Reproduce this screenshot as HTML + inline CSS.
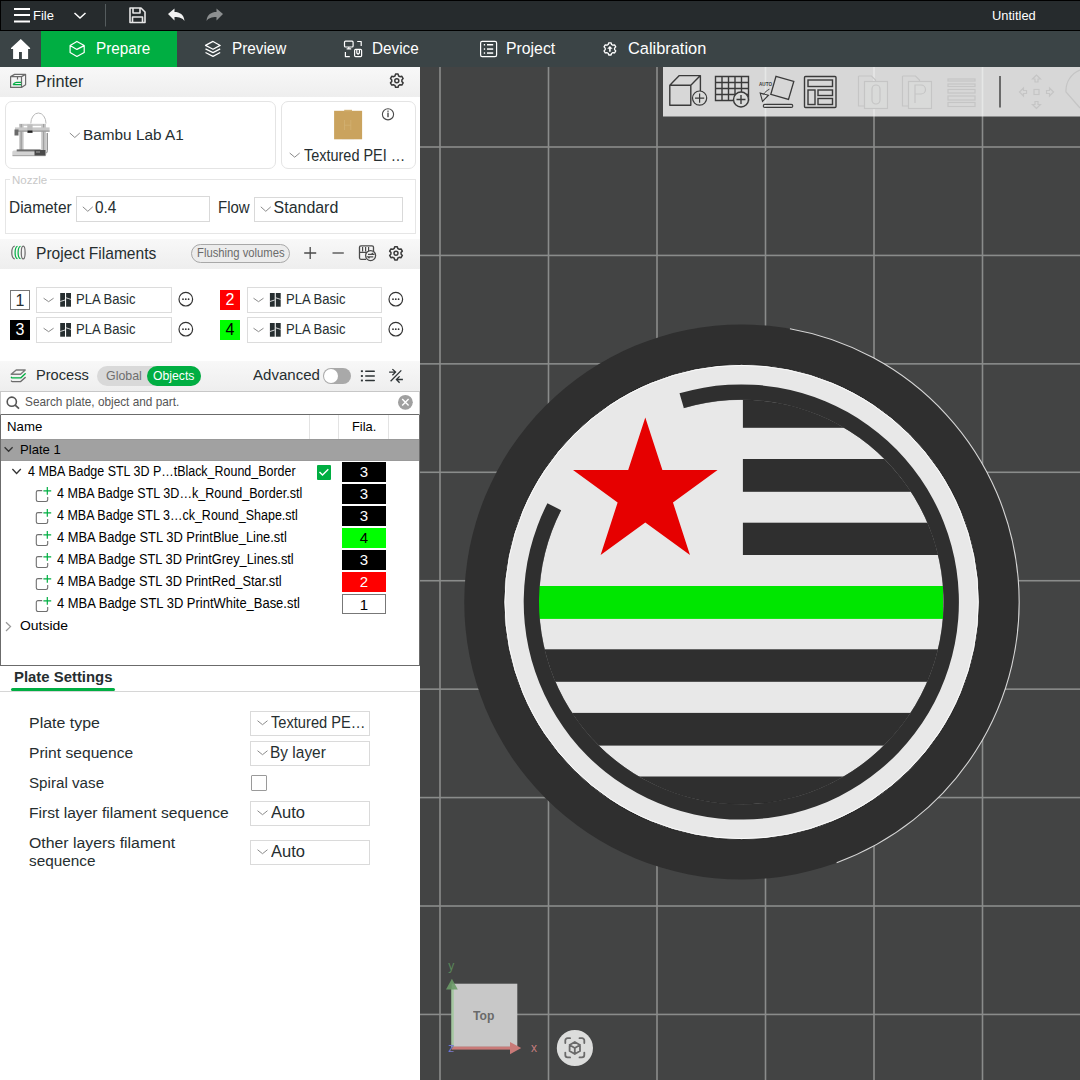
<!DOCTYPE html>
<html><head><meta charset="utf-8">
<style>
html,body{margin:0;padding:0;width:1080px;height:1080px;overflow:hidden;background:#fff;}
body{position:relative;font-family:"Liberation Sans",sans-serif;}
.a{position:absolute;box-sizing:border-box;}
.t{position:absolute;z-index:3;white-space:pre;line-height:1;font-family:"Liberation Sans",sans-serif;}
.fbox{position:absolute;left:342px;width:44px;height:20px;box-sizing:border-box;font:15px/20px "Liberation Sans",sans-serif;text-align:center;}
svg.ov{position:absolute;left:0;top:0;width:1080px;height:1080px;}
</style></head><body>
<!-- title bar -->
<div class="a" style="left:0;top:0;width:1080px;height:31px;background:#000;"></div>
<div class="a" style="left:1px;top:1px;width:1079px;height:28.5px;background:#262b2d;"></div>
<!-- tab bar -->
<div class="a" style="left:0;top:31px;width:1080px;height:36px;background:#3b4446;"></div>
<div class="a" style="left:41px;top:31px;width:136px;height:36px;background:#00ae42;"></div>
<!-- left panel headers -->
<div class="a" style="left:0;top:67px;width:420px;height:30px;background:linear-gradient(#f8f8f8,#eeeeee);"></div>
<div class="a" style="left:4.5px;top:101px;width:271px;height:67.5px;border:1px solid #e4e4e4;border-radius:7px;"></div>
<div class="a" style="left:280.5px;top:101px;width:135px;height:67.5px;border:1px solid #e4e4e4;border-radius:7px;"></div>
<div class="a" style="left:4.5px;top:179px;width:411px;height:54.5px;border:1px solid #e6e6e6;"></div>
<div class="a" style="left:10px;top:172px;width:40px;height:12px;background:#fff;"></div>
<div class="a" style="left:75.5px;top:196px;width:134px;height:25.5px;border:1px solid #d9d9d9;"></div>
<div class="a" style="left:253.5px;top:196.5px;width:149.5px;height:25px;border:1px solid #d9d9d9;"></div>
<div class="a" style="left:0;top:239px;width:420px;height:29.5px;background:linear-gradient(#f8f8f8,#eeeeee);"></div>
<div class="a" style="left:191px;top:244px;width:99px;height:19px;border:1px solid #a8a8a8;border-radius:10px;background:#ececec;"></div>
<div class="a" style="left:10px;top:290px;width:20px;height:20px;border:1px solid #777;background:#fff;"></div>
<div class="a" style="left:10px;top:320px;width:20px;height:19.5px;background:#000;color:#fff;font:16px/20px 'Liberation Sans';text-align:center;">3</div>
<div class="a" style="left:220px;top:290px;width:20px;height:20px;background:#ff0000;color:#fff;font:16px/20px 'Liberation Sans';text-align:center;">2</div>
<div class="a" style="left:220px;top:320px;width:20px;height:20px;background:#00ff00;color:#000;font:16px/20px 'Liberation Sans';text-align:center;">4</div>
<div class="a" style="left:10px;top:290.5px;width:20px;height:19.5px;color:#262e30;font:16px/20px 'Liberation Sans';text-align:center;">1</div>
<div class="a" style="left:36px;top:287px;width:135.5px;height:25.5px;border:1px solid #dcdcdc;"></div>
<div class="a" style="left:246.5px;top:287px;width:135.5px;height:25.5px;border:1px solid #dcdcdc;"></div>
<div class="a" style="left:36px;top:317px;width:135.5px;height:25.5px;border:1px solid #dcdcdc;"></div>
<div class="a" style="left:246.5px;top:317px;width:135.5px;height:25.5px;border:1px solid #dcdcdc;"></div>
<!-- process -->
<div class="a" style="left:0;top:361px;width:420px;height:30px;background:linear-gradient(#f8f8f8,#eeeeee);"></div>
<div class="a" style="left:97px;top:365.5px;width:103.5px;height:20.5px;border-radius:10.5px;background:#d9d9d9;"></div>
<div class="a" style="left:147px;top:366px;width:53.5px;height:20px;border-radius:10px;background:#00ae42;"></div>
<div class="a" style="left:322.5px;top:368px;width:28px;height:16px;border-radius:8px;background:#a9a9a9;"></div>
<div class="a" style="left:323.5px;top:369px;width:14px;height:14px;border-radius:7px;background:#fff;"></div>
<!-- search -->
<div class="a" style="left:0;top:391px;width:420px;height:24px;border:1px solid #c7c7c7;border-bottom:1.5px solid #6b6b6b;"></div>
<!-- table -->
<div class="a" style="left:0;top:414.5px;width:420px;height:251px;border:1px solid #6b6b6b;border-top:none;"></div>
<div class="a" style="left:308.5px;top:415px;width:1px;height:24px;background:#e3e3e3;"></div>
<div class="a" style="left:338px;top:415px;width:1px;height:24px;background:#e3e3e3;"></div>
<div class="a" style="left:388px;top:415px;width:1px;height:24px;background:#e3e3e3;"></div>
<div class="a" style="left:1px;top:439px;width:418px;height:21.5px;background:#a1a1a1;border-top:1px solid #999;border-bottom:1px solid #999;"></div>
<div class="a" style="left:317px;top:465px;width:14px;height:14.5px;background:#00ae42;border-radius:1px;"></div>
<div class="fbox" style="top:462px;background:#000;color:#fff;">3</div>
<div class="fbox" style="top:484px;background:#000;color:#fff;">3</div>
<div class="fbox" style="top:506px;background:#000;color:#fff;">3</div>
<div class="fbox" style="top:528px;background:#00ff00;color:#000;">4</div>
<div class="fbox" style="top:550px;background:#000;color:#fff;">3</div>
<div class="fbox" style="top:572px;background:#ff0000;color:#fff;">2</div>
<div class="fbox" style="top:594px;background:#fff;color:#000;border:1px solid #777;">1</div>
<!-- plate settings -->
<div class="a" style="left:11px;top:688px;width:104px;height:3px;border-radius:1.5px;background:#00ae42;"></div>
<div class="a" style="left:0;top:690.5px;width:420px;height:1px;background:#d6d6d6;"></div>
<div class="a" style="left:250px;top:710.5px;width:120px;height:25px;border:1px solid #dadada;"></div>
<div class="a" style="left:250px;top:740.5px;width:120px;height:25px;border:1px solid #dadada;"></div>
<div class="a" style="left:251px;top:775px;width:16px;height:15.5px;border:1px solid #9a9a9a;border-radius:1px;"></div>
<div class="a" style="left:250px;top:800.5px;width:120px;height:25px;border:1px solid #dadada;"></div>
<div class="a" style="left:250px;top:839.5px;width:120px;height:25px;border:1px solid #dadada;"></div>
<!-- 3D scene -->
<div class="a" style="left:420px;top:67px;width:660px;height:1013px;background:#434444;overflow:hidden;"></div>
<svg class="ov" viewBox="0 0 1080 1080" style="z-index:0"><defs><clipPath id="v3"><rect x="420" y="67" width="660" height="1013"/></clipPath></defs><g clip-path="url(#v3)" fill="#8a8c8b"><rect x="439.20" y="67" width="1.6" height="1013"/><rect x="547.70" y="67" width="1.6" height="1013"/><rect x="656.20" y="67" width="1.6" height="1013"/><rect x="764.70" y="67" width="1.6" height="1013"/><rect x="873.20" y="67" width="1.6" height="1013"/><rect x="981.70" y="67" width="1.6" height="1013"/><rect x="420" y="146.20" width="660" height="1.6"/><rect x="420" y="254.63" width="660" height="1.6"/><rect x="420" y="363.06" width="660" height="1.6"/><rect x="420" y="471.49" width="660" height="1.6"/><rect x="420" y="579.92" width="660" height="1.6"/><rect x="420" y="688.35" width="660" height="1.6"/><rect x="420" y="796.78" width="660" height="1.6"/><rect x="420" y="905.21" width="660" height="1.6"/><rect x="420" y="1013.64" width="660" height="1.6"/></g></svg>
<svg class="ov" viewBox="0 0 1080 1080" style="z-index:1"><defs><clipPath id="inner"><circle cx="741.3" cy="602" r="202.3"/></clipPath><clipPath id="v3b"><rect x="420" y="67" width="660" height="1013"/></clipPath></defs><g clip-path="url(#v3b)"><circle cx="741.75" cy="602" r="277.5" fill="#2f2f2f"/><path d="M789.92,328.81 A277.4,277.4 0 0 1 836.63,862.67" fill="none" stroke="#f2f2f2" stroke-width="1.1" opacity="0.85"/><circle cx="741.6" cy="602" r="237.6" fill="#e8e8e8" stroke="#141414" stroke-width="0.8"/><circle cx="741.6" cy="602" r="236.6" fill="none" stroke="#fbfbfb" stroke-width="1"/><g clip-path="url(#inner)" fill="#2f2f2f"><rect x="742.9" y="380" width="220" height="47.8"/><rect x="742.9" y="459" width="220" height="32.8"/><rect x="742.9" y="522.7" width="220" height="32.3"/><rect x="520" y="649.3" width="440" height="32.5"/><rect x="520" y="712.9" width="440" height="32.7"/><rect x="520" y="776.5" width="440" height="53.5"/></g><path d="M683.76,407.74 A202.6,202.6 0 1 1 560.78,510.02" fill="none" stroke="#1c1c1c" stroke-width="0.7" opacity="0.8"/><rect x="539" y="586" width="404" height="32.9" fill="#00e600"/><path d="M679.50,393.36 A217.6,217.6 0 1 1 547.42,503.21 L561.05,510.16 A202.3,202.3 0 1 0 683.84,408.03 Z" fill="#2f2f2f"/><polygon points="645.30,417.50 662.40,469.96 717.58,470.01 672.98,502.49 689.97,554.99 645.30,522.60 600.63,554.99 617.62,502.49 573.02,470.01 628.20,469.96" fill="#e60000"/></g><rect x="663" y="67" width="417" height="49.5" fill="#ffffff" opacity="0.79"/><g fill="none" stroke="#3a3a3a" stroke-width="1.4">
<path d="M669.8,85.2 h21 v20 h-21 z M669.8,85.2 l9.5,-9.6 h21.1 l-9.6,9.6 M700.4,75.6 v15.5" stroke-linejoin="round"/>
<circle cx="699.6" cy="98.1" r="7.1" fill="#d9dad9" stroke-width="1.2"/><path d="M695,98.1 h9.2 M699.6,93.5 v9.2" stroke-width="1.2"/>
<path d="M715.5,76.5 h33 v24 h-33 z M715.5,82.5 h33 M715.5,88.5 h33 M715.5,94.5 h33 M722,76.5 v24 M728.5,76.5 v24 M735,76.5 v24 M741.5,76.5 v24"/>
<circle cx="741" cy="99.5" r="7.5" fill="#d9dad9"/><path d="M736.5,99.5 h9 M741,95 v9"/>
<path d="M776,76.3 L793.8,81.5 L788.5,99.4 L770.8,94.4 Z" stroke-width="1.3"/>
<path d="M769.4,89.2 C767,90.5 765,92 763.3,94.6" stroke-width="1"/><path d="M760.2,93.1 L768.5,95.2 L762.5,101.5 Z" stroke-width="1.1"/>
<rect x="763.3" y="104.4" width="29.5" height="3" rx="1.5" stroke-width="1.1"/>
<rect x="804.5" y="76.5" width="31.5" height="31" rx="1"/>
<rect x="808" y="80" width="24.5" height="6.5"/><rect x="808" y="90" width="7" height="14.5"/><rect x="818" y="90" width="14.5" height="5.5"/><rect x="818" y="98.5" width="14.5" height="6"/>
</g>
<text x="759" y="85.8" font-family="Liberation Sans" font-size="5.6" font-weight="700" fill="#3a3a3a" textLength="13" lengthAdjust="spacingAndGlyphs">AUTO</text>
<g fill="none" stroke="#c5c5c5" stroke-width="1.2">
<path d="M858.5,76 h13 l4,4 v8"/><path d="M858.5,76 v30 h6"/><rect x="864.5" y="81.5" width="23" height="27" fill="#d9dad9"/>
<path d="M872,89 a4,4 0 0 1 8,0 v11 a4,4 0 0 1 -8,0 z"/>
<path d="M902.5,76 h13 l4,4 v8"/><path d="M902.5,76 v30 h6"/><rect x="908.5" y="81.5" width="23" height="27" fill="#d9dad9"/>
<path d="M915,103 v-18 h6 a4.5,4.5 0 0 1 0,9 h-6"/>
<rect x="948" y="79" width="27" height="2"/><rect x="948" y="84" width="27" height="2.5"/><rect x="948" y="89.5" width="27" height="3.5"/><rect x="948" y="96" width="27" height="4"/><rect x="948" y="102.5" width="27" height="4"/>
<path d="M1036.5,75 l-4,4 h2.5 v3 h3 v-3 h2.5 z M1036.5,108.5 l-4,-4 h2.5 v-3 h3 v3 h2.5 z M1019.5,92 l4,-4 v2.5 h3 v3 h-3 v2.5 z M1053.5,92 l-4,-4 v2.5 h-3 v3 h3 v2.5 z"/>
<rect x="1034" y="89.5" width="5" height="5"/>
<path d="M1080,70 a22,22 0 0 0 -14,22 l14,16"/>
</g>
<rect x="999" y="76" width="2" height="31.5" fill="#6a6a6a"/><rect x="451.7" y="983.7" width="65.6" height="63.2" fill="#c8c8c8"/><rect x="451.2" y="988" width="2.6" height="59.5" fill="#9fc79a" opacity="0.85"/><polygon points="451.9,978.8 446,989.5 457.8,989.5" fill="#6b9b68" opacity="0.9"/><rect x="452" y="1046.6" width="59" height="3" fill="#c97a78"/><polygon points="510,1042 510,1054.2 521.2,1048.1" fill="#c97a78"/><circle cx="574.9" cy="1048" r="18.1" fill="#dcdddc"/><g fill="none" stroke="#6a6a6a" stroke-width="1.8" stroke-linecap="round"><path d="M565.3,1043 v-2.5 a2.3,2.3 0 0 1 2.3,-2.3 h2.5"/><path d="M579.5,1038.2 h2.5 a2.3,2.3 0 0 1 2.3,2.3 v2.5"/><path d="M565.3,1052.6 v2.5 a2.3,2.3 0 0 0 2.3,2.3 h2.5"/><path d="M579.5,1057.4 h2.5 a2.3,2.3 0 0 0 2.3,-2.3 v-2.5"/><path d="M574.8,1042 l5.2,3 v6 l-5.2,3 l-5.2,-3 v-6 z M569.6,1045 l5.2,3 l5.2,-3 M574.8,1048 v6"/></g></svg>
<div class="t" style="left:33.18px;top:9.66px;font-size:12.75px;color:#ffffff;font-weight:400;transform:scaleX(1.0158);transform-origin:0 0;">File</div>
<div class="t" style="left:992.33px;top:9.27px;font-size:13.33px;color:#ffffff;font-weight:400;transform:scaleX(0.9674);transform-origin:0 0;">Untitled</div>
<div class="t" style="left:96.12px;top:41.20px;font-size:15.65px;color:#ffffff;font-weight:400;transform:scaleX(0.9759);transform-origin:0 0;">Prepare</div>
<div class="t" style="left:231.82px;top:41.20px;font-size:15.65px;color:#ffffff;font-weight:400;transform:scaleX(0.9782);transform-origin:0 0;">Preview</div>
<div class="t" style="left:371.82px;top:41.20px;font-size:15.65px;color:#ffffff;font-weight:400;transform:scaleX(0.9783);transform-origin:0 0;">Device</div>
<div class="t" style="left:506.19px;top:41.20px;font-size:15.65px;color:#ffffff;font-weight:400;transform:scaleX(1.0104);transform-origin:0 0;">Project</div>
<div class="t" style="left:628.15px;top:41.20px;font-size:15.65px;color:#ffffff;font-weight:400;transform:scaleX(1.0466);transform-origin:0 0;">Calibration</div>
<div class="t" style="left:35.60px;top:72.90px;font-size:16.23px;color:#262e30;font-weight:400;">Printer</div>
<div class="t" style="left:82.81px;top:127.12px;font-size:15.51px;color:#262e30;font-weight:400;transform:scaleX(0.9900);transform-origin:0 0;">Bambu Lab A1</div>
<div class="t" style="left:304.10px;top:147.02px;font-size:16.09px;color:#262e30;font-weight:400;transform:scaleX(0.8991);transform-origin:0 0;">Textured PEI …</div>
<div class="t" style="left:12.33px;top:174.59px;font-size:10.72px;color:#c8c8c8;font-weight:400;transform:scaleX(1.0742);transform-origin:0 0;">Nozzle</div>
<div class="t" style="left:8.93px;top:199.95px;font-size:15.94px;color:#262e30;font-weight:400;transform:scaleX(0.9688);transform-origin:0 0;">Diameter</div>
<div class="t" style="left:95.43px;top:200.15px;font-size:15.94px;color:#262e30;font-weight:400;transform:scaleX(0.9667);transform-origin:0 0;">0.4</div>
<div class="t" style="left:217.96px;top:199.95px;font-size:15.94px;color:#262e30;font-weight:400;transform:scaleX(0.9394);transform-origin:0 0;">Flow</div>
<div class="t" style="left:273.60px;top:200.05px;font-size:15.94px;color:#262e30;font-weight:400;">Standard</div>
<div class="t" style="left:35.65px;top:244.98px;font-size:16.38px;color:#262e30;font-weight:400;transform:scaleX(0.9520);transform-origin:0 0;">Project Filaments</div>
<div class="t" style="left:196.86px;top:247.17px;font-size:12.03px;color:#6b6b6b;font-weight:400;transform:scaleX(0.9370);transform-origin:0 0;">Flushing volumes</div>
<div class="t" style="left:75.80px;top:292.18px;font-size:14.49px;color:#262e30;font-weight:400;transform:scaleX(0.9016);transform-origin:0 0;">PLA Basic</div>
<div class="t" style="left:285.90px;top:292.18px;font-size:14.49px;color:#262e30;font-weight:400;transform:scaleX(0.9016);transform-origin:0 0;">PLA Basic</div>
<div class="t" style="left:75.80px;top:322.18px;font-size:14.49px;color:#262e30;font-weight:400;transform:scaleX(0.9016);transform-origin:0 0;">PLA Basic</div>
<div class="t" style="left:285.90px;top:322.18px;font-size:14.49px;color:#262e30;font-weight:400;transform:scaleX(0.9016);transform-origin:0 0;">PLA Basic</div>
<div class="t" style="left:35.62px;top:367.81px;font-size:14.93px;color:#262e30;font-weight:400;transform:scaleX(0.9792);transform-origin:0 0;">Process</div>
<div class="t" style="left:106.41px;top:369.81px;font-size:12.46px;color:#6e6e6e;font-weight:400;transform:scaleX(0.9941);transform-origin:0 0;">Global</div>
<div class="t" style="left:152.73px;top:369.68px;font-size:12.61px;color:#ffffff;font-weight:400;transform:scaleX(0.9690);transform-origin:0 0;">Objects</div>
<div class="t" style="left:253.40px;top:367.81px;font-size:14.93px;color:#262e30;font-weight:400;transform:scaleX(1.0076);transform-origin:0 0;">Advanced</div>
<div class="t" style="left:25.48px;top:395.54px;font-size:12.9px;color:#555555;font-weight:400;transform:scaleX(0.9163);transform-origin:0 0;">Search plate, object and part.</div>
<div class="t" style="left:6.56px;top:420.56px;font-size:12.75px;color:#000000;font-weight:400;transform:scaleX(1.0364);transform-origin:0 0;">Name</div>
<div class="t" style="left:351.69px;top:420.56px;font-size:12.75px;color:#000000;font-weight:400;transform:scaleX(1.0091);transform-origin:0 0;">Fila.</div>
<div class="t" style="left:19.61px;top:443.09px;font-size:13.19px;color:#000000;font-weight:400;transform:scaleX(0.9925);transform-origin:0 0;">Plate 1</div>
<div class="t" style="left:28.40px;top:464.68px;font-size:13.91px;color:#000000;font-weight:400;transform:scaleX(0.8960);transform-origin:0 0;">4 MBA Badge STL 3D P…tBlack_Round_Border</div>
<div class="t" style="left:56.60px;top:486.68px;font-size:13.91px;color:#000000;font-weight:400;transform:scaleX(0.9030);transform-origin:0 0;">4 MBA Badge STL 3D…k_Round_Border.stl</div>
<div class="t" style="left:56.60px;top:508.68px;font-size:13.91px;color:#000000;font-weight:400;transform:scaleX(0.8996);transform-origin:0 0;">4 MBA Badge STL 3…ck_Round_Shape.stl</div>
<div class="t" style="left:56.60px;top:530.68px;font-size:13.91px;color:#000000;font-weight:400;transform:scaleX(0.9279);transform-origin:0 0;">4 MBA Badge STL 3D PrintBlue_Line.stl</div>
<div class="t" style="left:56.60px;top:552.68px;font-size:13.91px;color:#000000;font-weight:400;transform:scaleX(0.9215);transform-origin:0 0;">4 MBA Badge STL 3D PrintGrey_Lines.stl</div>
<div class="t" style="left:56.60px;top:574.68px;font-size:13.91px;color:#000000;font-weight:400;transform:scaleX(0.9214);transform-origin:0 0;">4 MBA Badge STL 3D PrintRed_Star.stl</div>
<div class="t" style="left:56.60px;top:596.68px;font-size:13.91px;color:#000000;font-weight:400;transform:scaleX(0.9315);transform-origin:0 0;">4 MBA Badge STL 3D PrintWhite_Base.stl</div>
<div class="t" style="left:19.54px;top:619.29px;font-size:13.19px;color:#000000;font-weight:400;transform:scaleX(1.0568);transform-origin:0 0;">Outside</div>
<div class="t" style="left:13.89px;top:669.54px;font-size:14.78px;color:#262e30;font-weight:700;transform:scaleX(1.0083);transform-origin:0 0;">Plate Settings</div>
<div class="t" style="left:29.36px;top:715.44px;font-size:15.36px;color:#262e30;font-weight:400;transform:scaleX(1.0373);transform-origin:0 0;">Plate type</div>
<div class="t" style="left:29.38px;top:745.14px;font-size:15.36px;color:#262e30;font-weight:400;transform:scaleX(1.0168);transform-origin:0 0;">Print sequence</div>
<div class="t" style="left:29.41px;top:775.14px;font-size:15.36px;color:#262e30;font-weight:400;transform:scaleX(0.9880);transform-origin:0 0;">Spiral vase</div>
<div class="t" style="left:29.38px;top:805.04px;font-size:15.36px;color:#262e30;font-weight:400;transform:scaleX(1.0169);transform-origin:0 0;">First layer filament sequence</div>
<div class="t" style="left:29.37px;top:835.34px;font-size:15.36px;color:#262e30;font-weight:400;transform:scaleX(1.0312);transform-origin:0 0;">Other layers filament</div>
<div class="t" style="left:29.40px;top:852.84px;font-size:15.36px;color:#262e30;font-weight:400;transform:scaleX(0.9969);transform-origin:0 0;">sequence</div>
<div class="t" style="left:271.30px;top:714.95px;font-size:15.94px;color:#262e30;font-weight:400;transform:scaleX(0.9188);transform-origin:0 0;">Textured PE…</div>
<div class="t" style="left:270.33px;top:744.75px;font-size:15.94px;color:#262e30;font-weight:400;transform:scaleX(0.9702);transform-origin:0 0;">By layer</div>
<div class="t" style="left:271.30px;top:804.75px;font-size:15.94px;color:#262e30;font-weight:400;transform:scaleX(1.0375);transform-origin:0 0;">Auto</div>
<div class="t" style="left:271.30px;top:843.75px;font-size:15.94px;color:#262e30;font-weight:400;transform:scaleX(1.0375);transform-origin:0 0;">Auto</div>
<div class="t" style="left:473.20px;top:1009.42px;font-size:13.04px;color:#6a6a6a;font-weight:700;transform:scaleX(0.9304);transform-origin:0 0;">Top</div>
<div class="t" style="left:448.30px;top:959.87px;font-size:12.03px;color:#5a875a;font-weight:400;">y</div>
<div class="t" style="left:448.30px;top:1042.07px;font-size:12.03px;color:#7a7ad0;font-weight:400;">z</div>
<div class="t" style="left:530.90px;top:1042.07px;font-size:12.03px;color:#c47c7c;font-weight:400;">x</div>
<svg class="ov" viewBox="0 0 1080 1080" style="z-index:5">
<!-- title bar -->
<g fill="#ffffff"><rect x="14" y="8" width="16" height="2"/><rect x="14" y="14" width="16" height="2"/><rect x="14" y="20.5" width="16" height="2"/></g>
<path d="M74.5,13 l5.5,5 l5.5,-5" fill="none" stroke="#fff" stroke-width="1.5"/>
<rect x="105" y="4" width="1" height="22.5" fill="#555c5e"/>
<path d="M130,8 h11 l4,4 v10.5 h-15 z M133,8 v5 h7 v-5 M132.5,17 h10 v5.5 h-10 z" fill="none" stroke="#e6e6e6" stroke-width="1.6" stroke-linejoin="round"/>
<path d="M168,14 l6.5,-5.5 v3.5 c5,0 9.5,2.5 10,9 c-2,-3 -5,-4 -10,-4 v3.5 z" fill="#f2f2f2"/>
<path d="M223,14 l-6.5,-5.5 v3.5 c-5,0 -9.5,2.5 -10,9 c2,-3 5,-4 10,-4 v3.5 z" fill="#8c8f90"/>
<!-- tabs -->
<path d="M20.8,38.9 L11,47.9 V48.9 H13.1 V58.9 H19 V52.1 H21.9 V58.9 H28.1 V48.9 H30.1 V47.9 Z" fill="#fff"/>
<g fill="none" stroke="#fff" stroke-width="1.2" stroke-linejoin="round">
<path d="M76.9,41.4 L84.2,45.6 V52.5 L76.9,56.5 L70.1,52.5 V45.6 Z M70.1,45.6 L76.9,49.4 L84.2,45.6"/>
<path d="M213,41.4 L220.2,45.4 L213,49.3 L205.5,45.4 Z M205.5,48.9 L213,52.6 L220.2,48.9 M205.5,52.5 L213,56.4 L220.2,52.5"/>
<rect x="344.5" y="41.2" width="8.6" height="5.8" rx="1"/><path d="M348.8,47 v1.6 M346.6,48.8 h4.6 M357.2,41.5 h4 v4.5 M345.4,52 v4.7 h4.4"/>
<rect x="354.6" y="49.4" width="7" height="7.2" rx="1"/><path d="M356.8,50 v3 l1.3,1.2 l1.3,-1.2 v-3" />
<rect x="480.6" y="41.4" width="16" height="15.2" rx="1.6"/>
</g>
<g fill="#fff"><rect x="483.8" y="44" width="1.3" height="1.5"/><rect x="483.8" y="48.3" width="1.3" height="1.5"/><rect x="483.8" y="52.3" width="1.3" height="1.5"/>
<rect x="487" y="44" width="6.2" height="1.5"/><rect x="487" y="48.3" width="6.2" height="1.5"/><rect x="487" y="52.3" width="6.2" height="1.5"/></g>
<polygon points="607.54,44.82 608.21,44.50 608.72,42.81 611.08,42.81 611.59,44.50 612.26,44.82 612.87,45.24 614.58,44.83 615.76,46.88 614.55,48.16 614.61,48.90 614.55,49.64 615.76,50.92 614.58,52.97 612.87,52.56 612.26,52.98 611.59,53.30 611.08,54.99 608.72,54.99 608.21,53.30 607.54,52.98 606.93,52.56 605.22,52.97 604.04,50.92 605.25,49.64 605.19,48.90 605.25,48.16 604.04,46.88 605.22,44.83 606.93,45.24" fill="none" stroke="#fff" stroke-width="1.3" stroke-linejoin="round"/>
<path d="M609.9,45.9 l-2.7,2.8 h1.9 v3 h1.6 v-3 h1.9 z" fill="#fff"/>
<!-- printer header icon -->
<g fill="none" stroke="#6b6b6b" stroke-width="1.2" stroke-linejoin="round">
<path d="M10.6,76.6 h10.9 v10.8 h-10.9 z M10.6,76.6 l4,-2.2 h11 l-4.1,2.2 M25.6,74.4 v10.3 l-4.1,2.7 M17.5,76.6 v2.8"/>
</g>
<path d="M13,84.6 c1,-1.5 2,-2.3 3.5,-2.3 h4.7 M13,84.6 h8.2" fill="none" stroke="#00ae42" stroke-width="1.3"/>
<!-- gear printer -->
<polygon points="394.25,76.29 394.98,75.95 395.52,74.12 398.08,74.12 398.62,75.95 399.35,76.29 400.00,76.74 401.86,76.30 403.13,78.52 401.83,79.90 401.89,80.70 401.83,81.50 403.13,82.88 401.86,85.10 400.00,84.66 399.35,85.11 398.62,85.45 398.08,87.28 395.52,87.28 394.98,85.45 394.25,85.11 393.60,84.66 391.74,85.10 390.47,82.88 391.77,81.50 391.71,80.70 391.77,79.90 390.47,78.52 391.74,76.30 393.60,76.74" fill="none" stroke="#3a3a3a" stroke-width="1.5" stroke-linejoin="round"/><circle cx="396.8" cy="80.7" r="2.01" fill="none" stroke="#3a3a3a" stroke-width="1.5"/>
<!-- info -->
<circle cx="388" cy="114.3" r="5.6" fill="none" stroke="#4a4a4a" stroke-width="1.1"/>
<rect x="387.3" y="112.6" width="1.4" height="4.6" fill="#4a4a4a"/><rect x="387.3" y="110.6" width="1.4" height="1.2" fill="#4a4a4a"/>
<!-- chevrons in dropdowns -->
<g fill="none" stroke="#8a8a8a" stroke-width="1">
<path d="M69.8,133 l5,4.5 l5,-4.5"/><path d="M289.7,153 l5,4.2 l5,-4.2"/>
<path d="M82.8,206.8 l5,4.5 l5,-4.5"/><path d="M260.8,206.8 l5,4.5 l5,-4.5"/>
<path d="M43.6,298.2 l5,3.5 l5,-3.5"/><path d="M253.5,298.2 l5,3.5 l5,-3.5"/>
<path d="M43.6,328.2 l5,3.5 l5,-3.5"/><path d="M253.5,328.2 l5,3.5 l5,-3.5"/>
<path d="M257.5,720.7 l5,4 l5,-4"/><path d="M257.5,750.7 l5,4 l5,-4"/><path d="M257.5,810.7 l5,4 l5,-4"/><path d="M257.5,849.7 l5,4 l5,-4"/>
</g>
<!-- printer image -->
<g>
<path d="M30.8,123.5 a7.6,10.5 0 0 1 15.2,0" fill="none" stroke="#b9b9b9" stroke-width="1"/>
<rect x="19" y="123.8" width="27" height="2.2" fill="#cfcfcf"/>
<rect x="19.2" y="124" width="4.4" height="26" fill="#c4c4c4"/><rect x="20.6" y="124" width="1.2" height="26" fill="#9c9c9c"/>
<rect x="41.2" y="124" width="4.8" height="27" fill="#c8c8c8"/><rect x="43" y="124" width="1.2" height="27" fill="#a0a0a0"/>
<rect x="15" y="127.4" width="34.6" height="4.2" fill="#c9c9c9"/><rect x="15" y="130.6" width="34.6" height="1" fill="#8f8f8f"/>
<rect x="14.5" y="129.5" width="4" height="6" fill="#6a6a6a"/>
<rect x="27.3" y="124.4" width="5.3" height="8.2" fill="#bdbdbd"/><rect x="27.5" y="130.5" width="5" height="2.3" fill="#222"/>
<path d="M47.2,133 v17.5 c0,1.5 -0.5,2.5 -1.5,3" fill="none" stroke="#555" stroke-width="0.9"/>
<rect x="12.3" y="150.5" width="34" height="5.6" rx="1.5" fill="#d2d2d2"/><rect x="12.5" y="155" width="33" height="1.2" fill="#a8a8a8"/><rect x="16.7" y="149.4" width="24" height="2" fill="#6b6b6b"/>
<rect x="34.5" y="150" width="11" height="5.5" fill="#4a4a4a"/><rect x="36" y="151" width="4" height="2" fill="#777"/>
</g>
<!-- plate image -->
<rect x="334.1" y="110.8" width="28" height="28.5" fill="#caa35e"/><path d="M344.5,120 v10 M350.8,120 v10 M344.5,125.2 h6.3" stroke="#d4b679" stroke-width="0.6"/><rect x="342" y="139" width="12" height="0.9" fill="#e8e0d0"/><rect x="344.2" y="109.8" width="7.8" height="1.5" fill="#d2b070"/>
<!-- filament icon -->
<g fill="none" stroke-width="1.2">
<path d="M14.8,246 c-2,0.5 -3,3.5 -3,6.5 s1,6 3,6.5" stroke="#6b6b6b"/>
<path d="M17.5,246.2 c-1.5,0.5 -2.4,3.5 -2.4,6.3 s0.9,5.8 2.4,6.3" stroke="#00ae42"/>
<path d="M20.5,246.2 c-1.5,0.5 -2.4,3.5 -2.4,6.3 s0.9,5.8 2.4,6.3" stroke="#00ae42"/>
<ellipse cx="23.2" cy="252.5" rx="1.9" ry="6.4" stroke="#6b6b6b"/>
</g>
<!-- flushing header icons -->
<g fill="none" stroke="#4a4a4a" stroke-width="1.3">
<path d="M304.2,253 h12 M310.2,247 v12"/><path d="M332.5,253 h11.3"/>
<path d="M359.5,252.3 v-5 a1.5,1.5 0 0 1 1.5,-1.5 h11 a1.5,1.5 0 0 1 1.5,1.5 v4 M366,259.3 h-5 a1.5,1.5 0 0 1 -1.5,-1.5 v-5.5 h7"/>
<circle cx="370.6" cy="255.6" r="5"/><path d="M368,254.3 h5.3 l-1.5,-1.3 M373.3,256.9 h-5.3 l1.5,1.3"/>
</g>
<g fill="#4a4a4a"><rect x="362" y="247" width="1.2" height="4.5"/><rect x="365" y="247" width="1.2" height="4.5"/><rect x="368" y="247" width="1.2" height="4.5"/></g>
<polygon points="393.45,248.89 394.18,248.55 394.72,246.72 397.28,246.72 397.82,248.55 398.55,248.89 399.20,249.34 401.06,248.90 402.33,251.12 401.03,252.50 401.09,253.30 401.03,254.10 402.33,255.48 401.06,257.70 399.20,257.26 398.55,257.71 397.82,258.05 397.28,259.88 394.72,259.88 394.18,258.05 393.45,257.71 392.80,257.26 390.94,257.70 389.67,255.48 390.97,254.10 390.91,253.30 390.97,252.50 389.67,251.12 390.94,248.90 392.80,249.34" fill="none" stroke="#3a3a3a" stroke-width="1.5" stroke-linejoin="round"/><circle cx="396" cy="253.3" r="2.01" fill="none" stroke="#3a3a3a" stroke-width="1.5"/>
<!-- material icons -->
<rect x="60.2" y="293" width="4.8" height="13.7" fill="#262e30"/><rect x="66.10000000000001" y="293" width="4.9" height="13.7" fill="#262e30"/><path d="M60.2,301.5 l4.8,-1.5 M66.10000000000001,297.8 l4.9,1.6" stroke="#fff" stroke-width="0.8"/><rect x="269.9" y="293" width="4.8" height="13.7" fill="#262e30"/><rect x="275.79999999999995" y="293" width="4.9" height="13.7" fill="#262e30"/><path d="M269.9,301.5 l4.8,-1.5 M275.79999999999995,297.8 l4.9,1.6" stroke="#fff" stroke-width="0.8"/><rect x="60.2" y="323" width="4.8" height="13.7" fill="#262e30"/><rect x="66.10000000000001" y="323" width="4.9" height="13.7" fill="#262e30"/><path d="M60.2,331.5 l4.8,-1.5 M66.10000000000001,327.8 l4.9,1.6" stroke="#fff" stroke-width="0.8"/><rect x="269.9" y="323" width="4.8" height="13.7" fill="#262e30"/><rect x="275.79999999999995" y="323" width="4.9" height="13.7" fill="#262e30"/><path d="M269.9,331.5 l4.8,-1.5 M275.79999999999995,327.8 l4.9,1.6" stroke="#fff" stroke-width="0.8"/>
<!-- ellipsis circles -->
<circle cx="185.8" cy="299.2" r="6.8" fill="none" stroke="#333" stroke-width="1.2"/><g fill="#333"><circle cx="183.0" cy="299.2" r="0.9"/><circle cx="185.8" cy="299.2" r="0.9"/><circle cx="188.60000000000002" cy="299.2" r="0.9"/></g><circle cx="395.8" cy="299.2" r="6.8" fill="none" stroke="#333" stroke-width="1.2"/><g fill="#333"><circle cx="393.0" cy="299.2" r="0.9"/><circle cx="395.8" cy="299.2" r="0.9"/><circle cx="398.6" cy="299.2" r="0.9"/></g><circle cx="185.8" cy="329.2" r="6.8" fill="none" stroke="#333" stroke-width="1.2"/><g fill="#333"><circle cx="183.0" cy="329.2" r="0.9"/><circle cx="185.8" cy="329.2" r="0.9"/><circle cx="188.60000000000002" cy="329.2" r="0.9"/></g><circle cx="395.8" cy="329.2" r="6.8" fill="none" stroke="#333" stroke-width="1.2"/><g fill="#333"><circle cx="393.0" cy="329.2" r="0.9"/><circle cx="395.8" cy="329.2" r="0.9"/><circle cx="398.6" cy="329.2" r="0.9"/></g>
<!-- process icon -->
<g fill="none" stroke-width="1.4" stroke-linejoin="round" stroke-linecap="round">
<path d="M11.2,374.3 L16.2,370 H25.2 L20.6,374.3 Z" stroke="#7a7a7a"/>
<path d="M11.4,377.3 c0.3,0.5 0.6,0.6 1,0.6 H20.7 L25.2,373.8" stroke="#00ae42"/>
<path d="M11.4,381 c0.3,0.5 0.6,0.6 1,0.6 H20.7 L25.2,377.5" stroke="#6b6b6b"/>
</g>
<!-- list & swap -->
<g fill="#2e3436"><rect x="360.9" y="370.3" width="2" height="1.8"/><rect x="360.9" y="375.1" width="2" height="1.8"/><rect x="360.9" y="379.6" width="2" height="1.8"/>
<rect x="365" y="370.4" width="10" height="1.6" rx="0.8"/><rect x="365" y="375.2" width="10" height="1.6" rx="0.8"/><rect x="365" y="379.7" width="10" height="1.6" rx="0.8"/></g>
<path d="M390.6,381.3 L401.3,370.4 M389.1,372.1 H395.2 M392.4,369.1 L395.6,372.1 L392.4,375.2 M402.9,379.5 H396.8 M399.6,376.4 L396.4,379.5 L399.6,382.8" fill="none" stroke="#2e3436" stroke-width="1.3"/>
<!-- search -->
<circle cx="11.8" cy="401.7" r="4.6" fill="none" stroke="#555" stroke-width="1.6"/><path d="M15.2,405.2 l3.8,3.4" stroke="#555" stroke-width="1.8"/>
<circle cx="405.4" cy="402.3" r="7.4" fill="#a0a0a0"/><path d="M402.2,399.1 l6.4,6.4 M408.6,399.1 l-6.4,6.4" stroke="#fff" stroke-width="1.4"/>
<!-- tree chevrons -->
<g fill="none" stroke="#333" stroke-width="1.3"><path d="M4.6,447.3 l4,4 l4,-4"/><path d="M12.4,469 l4.2,4.5 l4.2,-4.5"/></g>
<path d="M6,622.2 l4.5,4.4 l-4.5,4.4" fill="none" stroke="#999" stroke-width="1.3"/>
<path d="M319.5,472 l3,3 l5.8,-5.8" fill="none" stroke="#fff" stroke-width="1.4"/>
<path d="M42.2,490.6 H38 a1.7,1.7 0 0 0 -1.7,1.7 V499.8 a1.7,1.7 0 0 0 1.7,1.7 H46 a1.7,1.7 0 0 0 1.7,-1.7 V497.0" fill="none" stroke="#6f6f6f" stroke-width="1.1"/><path d="M43.4,490.8 h7.8 M47.3,486.9 v7.8" stroke="#00ae42" stroke-width="1.2"/><path d="M42.2,512.6 H38 a1.7,1.7 0 0 0 -1.7,1.7 V521.8 a1.7,1.7 0 0 0 1.7,1.7 H46 a1.7,1.7 0 0 0 1.7,-1.7 V519.0" fill="none" stroke="#6f6f6f" stroke-width="1.1"/><path d="M43.4,512.8 h7.8 M47.3,508.9 v7.8" stroke="#00ae42" stroke-width="1.2"/><path d="M42.2,534.6 H38 a1.7,1.7 0 0 0 -1.7,1.7 V543.8 a1.7,1.7 0 0 0 1.7,1.7 H46 a1.7,1.7 0 0 0 1.7,-1.7 V541.0" fill="none" stroke="#6f6f6f" stroke-width="1.1"/><path d="M43.4,534.8 h7.8 M47.3,530.9 v7.8" stroke="#00ae42" stroke-width="1.2"/><path d="M42.2,556.6 H38 a1.7,1.7 0 0 0 -1.7,1.7 V565.8 a1.7,1.7 0 0 0 1.7,1.7 H46 a1.7,1.7 0 0 0 1.7,-1.7 V563.0" fill="none" stroke="#6f6f6f" stroke-width="1.1"/><path d="M43.4,556.8 h7.8 M47.3,552.9 v7.8" stroke="#00ae42" stroke-width="1.2"/><path d="M42.2,578.6 H38 a1.7,1.7 0 0 0 -1.7,1.7 V587.8 a1.7,1.7 0 0 0 1.7,1.7 H46 a1.7,1.7 0 0 0 1.7,-1.7 V585.0" fill="none" stroke="#6f6f6f" stroke-width="1.1"/><path d="M43.4,578.8 h7.8 M47.3,574.9 v7.8" stroke="#00ae42" stroke-width="1.2"/><path d="M42.2,600.6 H38 a1.7,1.7 0 0 0 -1.7,1.7 V609.8 a1.7,1.7 0 0 0 1.7,1.7 H46 a1.7,1.7 0 0 0 1.7,-1.7 V607.0" fill="none" stroke="#6f6f6f" stroke-width="1.1"/><path d="M43.4,600.8 h7.8 M47.3,596.9 v7.8" stroke="#00ae42" stroke-width="1.2"/>
</svg>
</body></html>
